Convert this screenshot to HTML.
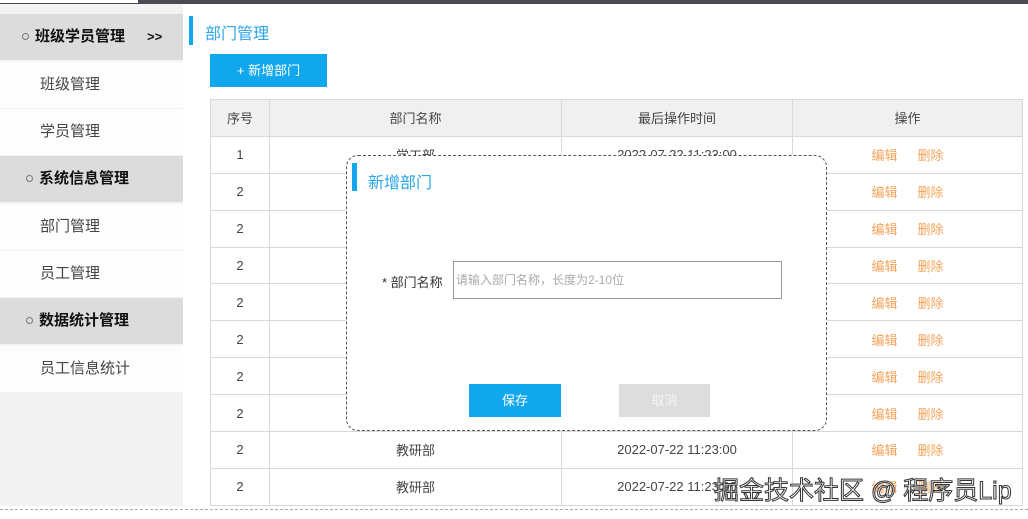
<!DOCTYPE html>
<html><head><meta charset="utf-8"><style>
*{margin:0;padding:0;box-sizing:border-box}
body{width:1028px;height:519px;overflow:hidden;background:#fff;font-family:"Liberation Sans","Noto Sans CJK SC",sans-serif;position:relative;color:#333}
.a{position:absolute}
.grp{position:absolute;left:0;width:183px;height:46px;background:#dcdcdc;font-weight:bold;font-size:15px;color:#111;line-height:46px}
.grp i{display:inline-block;width:7px;height:7px;border:1px solid #777;border-radius:50%;margin-right:6px;vertical-align:1px}
.it{position:absolute;left:0;width:183px;height:46px;background:#fdfdfd;font-size:15px;color:#444;line-height:46px;padding-left:40px}
table{position:absolute;left:210px;top:99px;border-collapse:collapse;font-size:13px;color:#444}
td,th{border:1px solid #d8d8d8;text-align:center;height:36.9px;font-weight:normal;padding:0}
th{background:#f0f0f0}
.op span{color:#f5a35a;margin:0 10px}
</style></head><body>
<div class="a" style="left:0;top:0;width:1028px;height:4px;background:#4a4a55"></div>
<div class="a" style="left:0;top:0;width:138px;height:3px;background:#fff"></div>
<div class="a" style="left:0;top:4px;width:183px;height:502px;background:#f3f3f3"></div>
<div class="grp" style="top:14px;padding-left:22px"><i></i>班级学员管理<span style="margin-left:22px;font-size:13px">&gt;&gt;</span></div>
<div class="it" style="top:62px">班级管理</div>
<div class="it" style="top:109px">学员管理</div>
<div class="grp" style="top:156px;padding-left:26px"><i></i>系统信息管理</div>
<div class="it" style="top:204px">部门管理</div>
<div class="it" style="top:251px">员工管理</div>
<div class="grp" style="top:298px;padding-left:26px"><i></i>数据统计管理</div>
<div class="it" style="top:346px">员工信息统计</div>

<div class="a" style="left:189px;top:16px;width:4px;height:29px;background:#11a7ec"></div>
<div class="a" style="left:205px;top:20px;font-size:16px;color:#2aa5e8">部门管理</div>
<div class="a" style="left:210px;top:54px;width:117px;height:33px;background:#11a7ec;color:#fff;font-size:13px;line-height:33px;text-align:center">+ 新增部门</div>

<table>
<tr><th style="width:59px">序号</th><th style="width:292px">部门名称</th><th style="width:231px">最后操作时间</th><th style="width:230px">操作</th></tr>
<tr><td>1</td><td>学工部</td><td>2022-07-22 11:23:00</td><td class="op"><span>编辑</span><span>删除</span></td></tr>
<tr><td>2</td><td>教研部</td><td>2022-07-22 11:23:00</td><td class="op"><span>编辑</span><span>删除</span></td></tr>
<tr><td>2</td><td>教研部</td><td>2022-07-22 11:23:00</td><td class="op"><span>编辑</span><span>删除</span></td></tr>
<tr><td>2</td><td>教研部</td><td>2022-07-22 11:23:00</td><td class="op"><span>编辑</span><span>删除</span></td></tr>
<tr><td>2</td><td>教研部</td><td>2022-07-22 11:23:00</td><td class="op"><span>编辑</span><span>删除</span></td></tr>
<tr><td>2</td><td>教研部</td><td>2022-07-22 11:23:00</td><td class="op"><span>编辑</span><span>删除</span></td></tr>
<tr><td>2</td><td>教研部</td><td>2022-07-22 11:23:00</td><td class="op"><span>编辑</span><span>删除</span></td></tr>
<tr><td>2</td><td>教研部</td><td>2022-07-22 11:23:00</td><td class="op"><span>编辑</span><span>删除</span></td></tr>
<tr><td>2</td><td>教研部</td><td>2022-07-22 11:23:00</td><td class="op"><span>编辑</span><span>删除</span></td></tr>
<tr><td>2</td><td>教研部</td><td>2022-07-22 11:23:00</td><td class="op"><span>编辑</span><span>删除</span></td></tr>
</table>
<div class="a" style="left:0;top:509px;width:1028px;border-top:1px dashed #aaa"></div>

<div class="a" style="left:346px;top:155px;width:481px;height:276px;background:#fff;border:1px dashed #555;border-radius:12px"></div>
<div class="a" style="left:352px;top:163px;width:5px;height:28px;background:#11a7ec"></div>
<div class="a" style="left:368px;top:169px;font-size:16px;color:#2aa5e8">新增部门</div>
<div class="a" style="left:382px;top:272px;font-size:13px;color:#333">* 部门名称</div>
<div class="a" style="left:453px;top:261px;width:329px;height:38px;border:1px solid #999;font-size:12px;color:#aaa;line-height:36px;padding-left:2px">请输入部门名称，长度为2-10位</div>
<div class="a" style="left:469px;top:384px;width:92px;height:33px;background:#11a7ec;color:#fff;font-size:13px;line-height:33px;text-align:center">保存</div>
<div class="a" style="left:619px;top:384px;width:91px;height:33px;background:#ddd;color:#f4f4f4;font-size:13px;line-height:33px;text-align:center">取消</div>

<div class="a" style="left:714px;top:471px;font-size:25px;color:#fff;-webkit-text-stroke:1px #333">掘金技术社区 @ 程序员Lip</div>
</body></html>
